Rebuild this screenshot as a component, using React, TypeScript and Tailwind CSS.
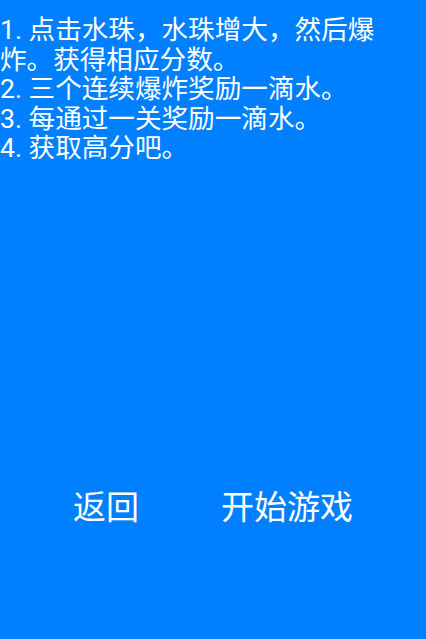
import React from "react";

const rules = [
    "1. 点击水珠，水珠增大，然后爆炸。获得相应分数。",
    "2. 三个连续爆炸奖励一滴水。",
    "3. 每通过一关奖励一滴水。",
    "4. 获取高分吧。",
];

export default function App() {
    const handleBack = () => {
        window.history.back();
    };

    const handleStart = () => {
        console.log("start");
    };

    return (
        <div
            className="w-full h-[639px] bg-[#0080ff] text-white flex flex-col overflow-hidden"
            style={{ fontFamily: 'Roboto, "Noto Sans CJK SC", sans-serif' }}
        >
            <div className="pt-[15px] w-[392px] text-[26.6px] leading-[29.5px]">
                {rules.map((rule) => (
                    <p key={rule}>{rule}</p>
                ))}
            </div>
            <div className="mt-auto mb-[114px] flex justify-center gap-[82px] text-[33px] leading-[34px]">
                <button onClick={handleBack}>返回</button>
                <button onClick={handleStart}>开始游戏</button>
            </div>
        </div>
    );
}
